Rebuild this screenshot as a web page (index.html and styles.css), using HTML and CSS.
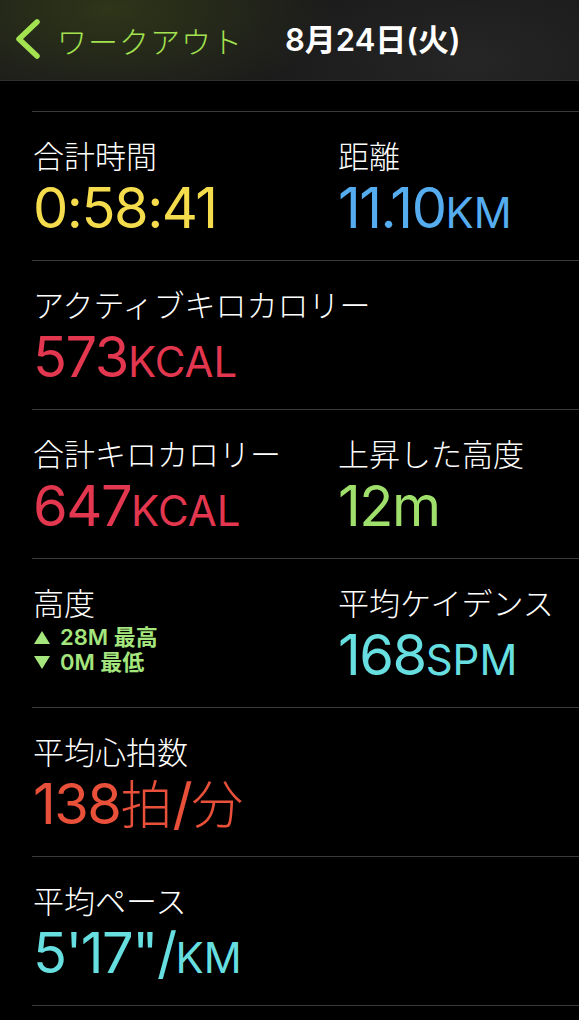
FILE: index.html
```html
<!DOCTYPE html>
<html lang="ja">
<head>
<meta charset="utf-8">
<title>ワークアウト</title>
<link rel="stylesheet" href="styles.css">
</head>
<body>
<header class="nav">
  <div class="back">
    <svg class="chev" viewBox="0 0 26 40" width="26" height="40" aria-hidden="true">
      <polyline points="22,3 4,20 22,37" fill="none" stroke="#a3e34f" stroke-width="5.5" stroke-linecap="round" stroke-linejoin="round"/>
    </svg>
    <span class="back-text">ワークアウト</span>
  </div>
  <div class="title">8月24日(火)</div>
</header>

<main class="list">
  <section class="row">
    <div class="cell">
      <div class="label">合計時間</div>
      <div class="value c-yellow">0:58:41</div>
    </div>
    <div class="cell">
      <div class="label">距離</div>
      <div class="value c-blue">11.10<span class="unit">KM</span></div>
    </div>
  </section>

  <section class="row">
    <div class="cell">
      <div class="label">アクティブキロカロリー</div>
      <div class="value c-red">573<span class="unit">KCAL</span></div>
    </div>
  </section>

  <section class="row">
    <div class="cell">
      <div class="label">合計キロカロリー</div>
      <div class="value c-red">647<span class="unit">KCAL</span></div>
    </div>
    <div class="cell">
      <div class="label">上昇した高度</div>
      <div class="value c-green">12m</div>
    </div>
  </section>

  <section class="row">
    <div class="cell">
      <div class="label">高度</div>
      <div class="alt">
        <div class="alt-line">
          <svg class="tri" viewBox="0 0 16 13" width="16" height="13" aria-hidden="true"><polygon points="8,0 16,13 0,13" fill="#a5e57d"/></svg>
          <span>28M 最高</span>
        </div>
        <div class="alt-line">
          <svg class="tri" viewBox="0 0 16 13" width="16" height="13" aria-hidden="true"><polygon points="0,0 16,0 8,13" fill="#a5e57d"/></svg>
          <span>0M 最低</span>
        </div>
      </div>
    </div>
    <div class="cell">
      <div class="label">平均ケイデンス</div>
      <div class="value c-cyan">168<span class="unit">SPM</span></div>
    </div>
  </section>

  <section class="row">
    <div class="cell">
      <div class="label">平均心拍数</div>
      <div class="value c-orange">138<span class="cjk">拍</span>/<span class="cjk">分</span></div>
    </div>
  </section>

  <section class="row">
    <div class="cell">
      <div class="label">平均ペース</div>
      <div class="value c-cyan">5'17"/<span class="unit">KM</span></div>
    </div>
  </section>
</main>
</body>
</html>
```

FILE: styles.css
```css
* {
  box-sizing: border-box;
  margin: 0;
  padding: 0;
}

html, body {
  background: #000;
}

body {
  width: 579px;
  height: 1020px;
  overflow: hidden;
  font-family: "Noto Sans CJK JP", sans-serif;
  color: #fff;
}

.nav {
  height: 81px;
  border-bottom: 1px solid #303030;
  display: flex;
  align-items: center;
  padding-left: 15px;
  background:
    radial-gradient(ellipse 300px 130px at 110px 10px, rgba(62, 75, 22, 0.55), rgba(0, 0, 0, 0) 75%),
    radial-gradient(ellipse 260px 120px at 470px 60px, rgba(50, 50, 50, 0.45), rgba(0, 0, 0, 0) 80%),
    #1b1b1b;
}

.back {
  display: flex;
  align-items: center;
  color: #a3e34f;
  font-size: 30px;
  font-weight: 300;
  line-height: 36px;
}

.chev {
  display: block;
  margin-right: 16px;
  margin-top: -2px;
}

.back-text {
  letter-spacing: 1px;
}

.title {
  margin-left: 42px;
  font-family: Inter, "Noto Sans CJK JP", sans-serif;
  font-weight: 600;
  font-size: 31px;
  line-height: 36px;
}

.list {
  margin-top: 30px;
  margin-left: 32px;
  border-top: 1px solid #3a3a3a;
}

.row {
  height: 149px;
  border-bottom: 1px solid #3a3a3a;
  display: grid;
  grid-template-columns: 305px 1fr;
  align-content: start;
  padding: 25px 0 0 1px;
}

.label {
  font-size: 31px;
  font-weight: 300;
  line-height: 36px;
  white-space: nowrap;
}

.value {
  font-family: Inter, "Noto Sans CJK JP", sans-serif;
  font-size: 56px;
  line-height: 60px;
  margin-top: 5px;
  letter-spacing: -1.5px;
  white-space: nowrap;
}

.unit {
  font-size: 42px;
  letter-spacing: 0;
}

.cjk {
  font-size: 52px;
  font-weight: 300;
  letter-spacing: 0;
}

.c-yellow { color: #f4dc4c; }
.c-blue { color: #55adf0; }
.c-red { color: #e2374f; }
.c-green { color: #9fe06c; }
.c-cyan { color: #67dfe0; }
.c-orange { color: #e8503a; }

.alt {
  margin-top: 5px;
  color: #a5e57d;
  font-family: Inter, "Noto Sans CJK JP", sans-serif;
  font-weight: 600;
  font-size: 22px;
  line-height: 25px;
}

.alt-line {
  display: flex;
  align-items: center;
  gap: 10px;
}

.tri {
  display: block;
  margin-left: 1px;
}
```
